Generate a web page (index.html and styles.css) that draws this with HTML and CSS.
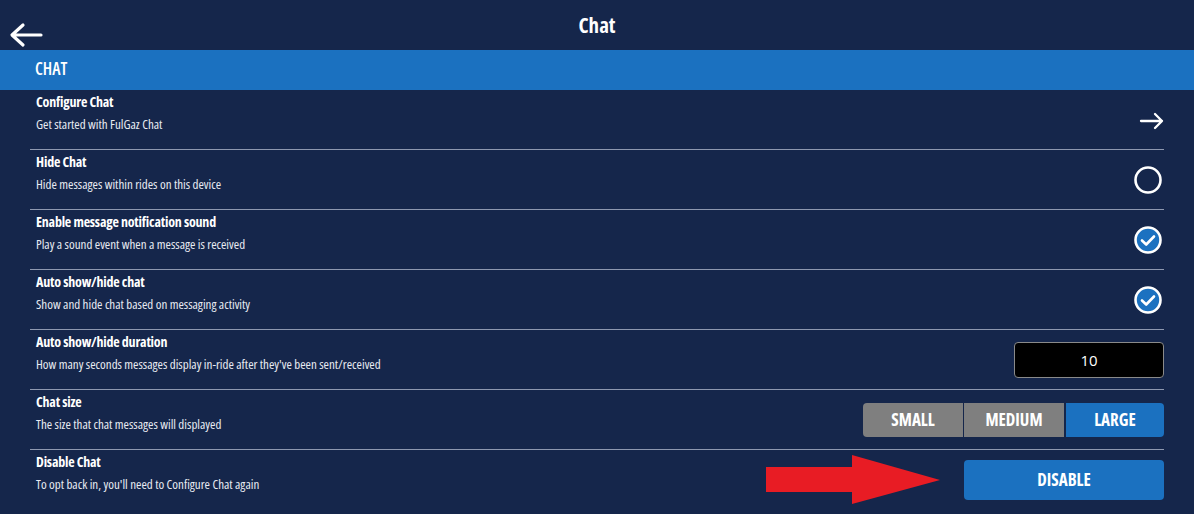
FILE: index.html
```html
<!DOCTYPE html>
<html lang="en">

<head>
    <meta charset="UTF-8">
    <meta name="viewport" content="width=device-width, initial-scale=1.0">
    <title>Chat</title>
    <link rel="stylesheet" href="styles.css">
</head>

<body>

    <!-- Заголовок страницы -->
    <header class="top-bar">
        <button class="back-button" aria-label="Back">
            <svg width="34" height="26" viewBox="0 0 34 26">
                <path d="M32 13 H4 M14 3 L3 13 L14 23" fill="none" stroke="#fff" stroke-width="3.2" stroke-linecap="round" stroke-linejoin="round"/>
            </svg>
        </button>
        <h1 class="page-title">Chat</h1>
    </header>

    <div class="section-bar">CHAT</div>

    <!-- Список настроек -->
    <ul class="settings">
        <li class="setting">
            <div class="setting-text">
                <div class="setting-title">Configure Chat</div>
                <div class="setting-desc">Get started with FulGaz Chat</div>
            </div>
            <svg class="go-arrow" width="25" height="18" viewBox="0 0 25 18">
                <path d="M2 9 H23 M16 2 L23 9 L16 16" fill="none" stroke="#fff" stroke-width="2.3" stroke-linecap="round" stroke-linejoin="round"/>
            </svg>
        </li>
        <li class="setting">
            <div class="setting-text">
                <div class="setting-title">Hide Chat</div>
                <div class="setting-desc">Hide messages within rides on this device</div>
            </div>
            <svg class="check" width="30" height="30" viewBox="0 0 30 30">
                <circle cx="15" cy="15" r="12.5" fill="none" stroke="#fff" stroke-width="2.6"/>
            </svg>
        </li>
        <li class="setting">
            <div class="setting-text">
                <div class="setting-title">Enable message notification sound</div>
                <div class="setting-desc">Play a sound event when a message is received</div>
            </div>
            <svg class="check" width="30" height="30" viewBox="0 0 30 30">
                <circle cx="15" cy="15" r="12.5" fill="#1b71c0" stroke="#fff" stroke-width="2.6"/>
                <path d="M9 15.5 L13.2 19.5 L21 11.5" fill="none" stroke="#fff" stroke-width="2.6" stroke-linecap="round" stroke-linejoin="round"/>
            </svg>
        </li>
        <li class="setting">
            <div class="setting-text">
                <div class="setting-title">Auto show/hide chat</div>
                <div class="setting-desc">Show and hide chat based on messaging activity</div>
            </div>
            <svg class="check" width="30" height="30" viewBox="0 0 30 30">
                <circle cx="15" cy="15" r="12.5" fill="#1b71c0" stroke="#fff" stroke-width="2.6"/>
                <path d="M9 15.5 L13.2 19.5 L21 11.5" fill="none" stroke="#fff" stroke-width="2.6" stroke-linecap="round" stroke-linejoin="round"/>
            </svg>
        </li>
        <li class="setting">
            <div class="setting-text">
                <div class="setting-title">Auto show/hide duration</div>
                <div class="setting-desc">How many seconds messages display in-ride after they've been sent/received</div>
            </div>
            <div class="number-box">10</div>
        </li>
        <li class="setting">
            <div class="setting-text">
                <div class="setting-title">Chat size</div>
                <div class="setting-desc">The size that chat messages will displayed</div>
            </div>
            <div class="segments">
                <button class="segment">SMALL</button>
                <button class="segment">MEDIUM</button>
                <button class="segment active">LARGE</button>
            </div>
        </li>
        <li class="setting last">
            <div class="setting-text">
                <div class="setting-title">Disable Chat</div>
                <div class="setting-desc">To opt back in, you'll need to Configure Chat again</div>
            </div>
            <div class="disable-wrap">
                <svg class="red-arrow" width="176" height="50" viewBox="0 0 176 50">
                    <polygon points="0,12 86,12 86,0 174,25 86,49 86,37 0,37" fill="#e81c24"/>
                </svg>
                <button class="disable-button">DISABLE</button>
            </div>
        </li>
    </ul>

</body>

</html>
```

FILE: styles.css
```css
/* Общие стили страницы */
body {
    margin: 0;
    background-color: #15264b;
    color: #fff;
    font-family: "Open Sans", "Roboto", sans-serif;
    font-stretch: 75%;
    overflow: hidden;
}

button {
    font-family: inherit;
    font-stretch: inherit;
    border: none;
    cursor: pointer;
}

.top-bar {
    position: relative;
    height: 50px;
    display: flex;
    align-items: center;
    justify-content: center;
}

.back-button {
    position: absolute;
    left: 9px;
    top: 22px;
    padding: 0;
    background: none;
    line-height: 0;
}

.page-title {
    margin: 0;
    font-size: 21px;
    font-weight: bold;
}

.section-bar {
    height: 40px;
    box-sizing: border-box;
    padding: 0 0 4px 35px;
    background-color: #1b71c0;
    display: flex;
    align-items: center;
    font-size: 17px;
    font-weight: 600;
}

.settings {
    list-style: none;
    margin: 0 30px;
    padding: 0;
}

.setting {
    height: 59px;
    border-bottom: 1px solid #8e98b0;
    display: flex;
    align-items: center;
    justify-content: space-between;
}

.setting.last {
    border-bottom: none;
    height: 64px;
}

.setting-text {
    padding-left: 6px;
    align-self: flex-start;
}

.setting-title {
    margin-top: 2px;
    font-size: 14px;
    font-weight: bold;
    letter-spacing: -0.2px;
    line-height: 20px;
}

.setting-desc {
    margin-top: 3px;
    font-size: 13px;
    line-height: 18px;
    color: #e8ebf2;
}

.go-arrow {
    margin-top: 2px;
}

.check {
    margin-right: 1px;
}

.number-box {
    width: 148px;
    height: 34px;
    background-color: #000;
    border: 1px solid #8a8a8a;
    border-radius: 4px;
    display: flex;
    align-items: center;
    justify-content: center;
    font-stretch: 100%;
    font-size: 15px;
}

.segments {
    display: flex;
    gap: 1px;
    border-radius: 4px;
    overflow: hidden;
}

.segment {
    width: 100px;
    height: 34px;
    background-color: #7f7f7f;
    color: #fff;
    font-size: 17px;
    font-weight: bold;
}

.segment.active {
    width: 98px;
    margin-left: 1px;
    background-color: #1b71c0;
}

.disable-wrap {
    display: flex;
    align-items: center;
    gap: 22px;
    margin-top: -5px;
}

.disable-button {
    width: 200px;
    height: 40px;
    border-radius: 4px;
    background-color: #1b71c0;
    color: #fff;
    font-size: 17px;
    font-weight: bold;
}
```
